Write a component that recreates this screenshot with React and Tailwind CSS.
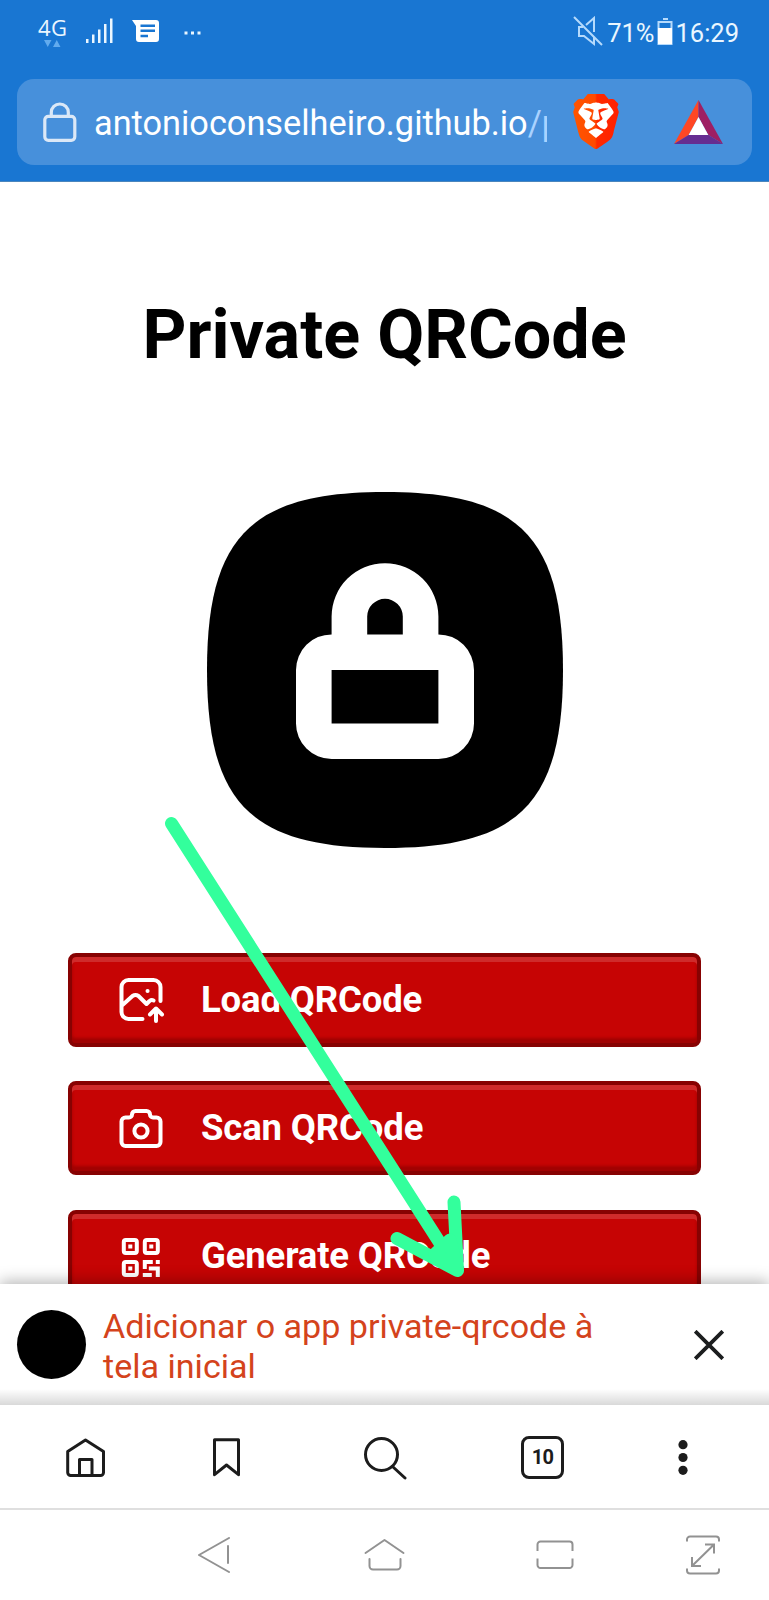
const ROBOTO = "font-['Roboto',sans-serif]";

function StatusBar() {
  return (
    <div className="flex h-[64px] shrink-0 items-start justify-between pl-[38px] pr-[30px] text-[#eaf6ff]">
      <div className="flex items-start pt-[17px]">
        <div className="-mt-[2px] flex w-[30px] flex-col">
          <span className="font-['Open_Sans',sans-serif] text-[22px] leading-[24px] tracking-[0.5px]">4G</span>
          <svg className="ml-[6px] mt-px" width="18" height="7" viewBox="0 0 18 7" fill="#62abee">
            <path d="M0 0h7.500L3.750 7zM9 7h7.500L12.750 0z" />
          </svg>
        </div>
        <svg className="ml-[17px] mt-px" width="29" height="26" viewBox="0 0 29 26" fill="currentColor">
          <path d="M1 21h2.500v4H1zM7 16.500h2.500V25H7zM13 11.500h2.500V25H13zM19 6h2.500v19H19zM25 .500h2.500V25H25z" />
        </svg>
        <svg className="ml-[18px] mt-[3px]" width="28" height="23" viewBox="0 0 28 23">
          <path d="M0 0h24a3 3 0 0 1 3 3v16a3 3 0 0 1-3 3H7a3 3 0 0 1-3-3V6z" fill="#fff" />
          <path d="M8.500 5.800H23M8.500 10.800H23M8.500 16H16" stroke="#1976d2" strokeWidth="2.500" />
        </svg>
        <svg className="ml-[24px] mt-[14px]" width="18" height="4" viewBox="0 0 18 4" fill="currentColor">
          <path d="M.500.500h3v3h-3zM7 .500h3v3H7zM13.500.500h3v3h-3z" />
        </svg>
      </div>
      <div className={`flex items-start pt-[16px] ${ROBOTO}`}>
        <svg width="31" height="31" viewBox="0 0 31 31" fill="none" stroke="#b5dafc" strokeWidth="2">
          <path d="M1 1l28 28M13 9l8-7v14M21 21v7L11 20H6V11h4" />
        </svg>
        <span className="ml-[3px] text-[25.500px] leading-[34px]">71%</span>
        <svg className="ml-[3px] mt-[1.500px]" width="17" height="28" viewBox="0 0 17 28">
          <path d="M6 1h5" stroke="#b5dafc" strokeWidth="2" />
          <rect x="1.500" y="4" width="13" height="22" fill="none" stroke="#b5dafc" strokeWidth="2" />
          <path d="M1 10h14v16H1z" fill="#fff" />
        </svg>
        <span className="ml-px text-[25.500px] leading-[34px]">16:29</span>
      </div>
    </div>
  );
}

function BraveIcon() {
  return (
    <svg width="46" height="55" viewBox="1.700 0 20.600 24" preserveAspectRatio="none">
      <defs>
        <linearGradient id="brave" x1="0" x2="1">
          <stop offset="0" stopColor="#ff5500" />
          <stop offset=".48" stopColor="#ff4a00" />
          <stop offset=".52" stopColor="#ff2a00" />
          <stop offset="1" stopColor="#ff2000" />
        </linearGradient>
      </defs>
      <path d="M7 3.200h10l3.500 4.500-3.500 8-5 4-5-4-3.500-8z" fill="#fff" />
      <path
        fill="url(#brave)"
        d="M15.680 0l2.096 2.380s1.840-.512 2.709.358c.868.870 1.584 1.638 1.584 1.638l-.562 1.381.715 2.047s-2.104 7.980-2.350 8.955c-.486 1.919-.818 2.660-2.198 3.633-1.380.972-3.884 2.660-4.293 2.916-.409.256-.920.692-1.380.692-.460 0-.970-.436-1.380-.692a185.796 185.796 0 01-4.293-2.916c-1.380-.973-1.712-1.714-2.197-3.633-.247-.975-2.351-8.955-2.351-8.955l.715-2.047-.562-1.381s.716-.768 1.585-1.638c.868-.870 2.708-.358 2.708-.358L8.321 0h7.360zm-3.679 14.936c-.140 0-1.038.317-1.758.690-.720.373-1.242.637-1.409.742-.167.104-.065.301.087.409.152.107 2.194 1.690 2.393 1.866.198.175.489.464.687.464.198 0 .490-.290.688-.464.198-.175 2.240-1.759 2.392-1.866.152-.108.254-.305.087-.410-.167-.104-.689-.368-1.410-.741-.720-.373-1.617-.690-1.757-.690zm0-11.278s-.409.001-1.022.206-1.278.460-1.584.460c-.307 0-2.581-.434-2.581-.434S4.119 7.152 4.119 7.849c0 .697.339.881.680 1.243l2.020 2.149c.192.203.590.511.356 1.066-.235.555-.580 1.260-.196 1.977.384.716 1.042 1.194 1.464 1.115.421-.080 1.412-.598 1.776-.834.364-.237 1.518-1.190 1.518-1.554 0-.365-1.193-1.020-1.413-1.168-.220-.150-1.226-.725-1.247-.950-.020-.227-.012-.293.284-.851.297-.559.831-1.304.742-1.800-.089-.495-.950-.753-1.565-.986-.615-.232-1.799-.671-1.947-.740-.148-.068-.110-.133.339-.175.448-.043 1.719-.212 2.292-.052.573.160 1.552.403 1.632.532.079.130.149.134.067.579-.081.445-.500 2.581-.541 2.960-.040.380-.120.630.288.724.409.094 1.097.256 1.333.256s.924-.162 1.333-.256c.408-.093.329-.344.288-.723-.040-.380-.460-2.516-.541-2.961-.082-.445-.012-.450.067-.579.080-.129 1.059-.372 1.632-.532.573-.160 1.845.009 2.292.052.449.042.487.107.339.175-.148.069-1.332.508-1.947.740-.615.233-1.476.490-1.565.986-.090.496.445 1.241.742 1.800.297.558.304.624.284.850-.020.226-1.026.802-1.247.950-.220.150-1.413.804-1.413 1.169 0 .364 1.154 1.317 1.518 1.554.364.236 1.355.755 1.776.834.422.079 1.080-.400 1.464-1.115.384-.716.039-1.422-.195-1.977-.235-.555.163-.863.355-1.066l2.020-2.149c.341-.362.680-.546.680-1.243 0-.697-2.695-3.960-2.695-3.960s-2.274.436-2.580.436c-.307 0-.972-.256-1.585-.461-.613-.205-1.022-.206-1.022-.206z"
      />
    </svg>
  );
}

function AddressBar() {
  return (
    <div className="mx-[17px] mt-[15px] flex h-[86px] items-center rounded-[17px] bg-[#4790db]">
      <svg className="ml-[26px]" width="34" height="40" viewBox="0 0 34 40" fill="none" stroke="#dbe8f7" strokeWidth="3.200">
        <rect x="1.800" y="14.300" width="30" height="24" rx="3.500" />
        <path d="M8.300 14V10.500a8.500 8.500 0 0 1 17 0V14" />
      </svg>
      <div className={`ml-[17px] w-[453px] overflow-hidden whitespace-nowrap pt-px text-[34.300px] leading-[44px] text-white ${ROBOTO}`}>
        antonioconselheiro.github.io<span className="text-[#a9d2ff]">/p</span>
      </div>
      <div className="mb-[2px] ml-[26px] flex">
        <BraveIcon />
      </div>
      <svg className="mb-px ml-[55px]" width="49" height="44" viewBox="0 0 50 44" preserveAspectRatio="none">
        <path d="M25 0v17L15 35 0 44z" fill="#ff4724" />
        <path d="M25 0l25 44-15-9-10-18z" fill="#9e1f63" />
        <path d="M0 44l15-9h20l15 9z" fill="#662d91" />
        <path d="M25 17l10 18H15z" fill="#fff" />
      </svg>
    </div>
  );
}

function AppLogo() {
  return (
    <svg className="mt-[114px] shrink-0 self-center" width="356" height="356" viewBox="0 0 20 20">
      <path d="M0 10C0 2.500 2.500 0 10 0s10 2.500 10 10-2.500 10-10 10S0 17.500 0 10z" />
      <path
        fill="#fff"
        fillRule="evenodd"
        d="M7 8V7a3 3 0 0 1 6 0v1a2 2 0 0 1 2 2v3a2 2 0 0 1-2 2H7a2 2 0 0 1-2-2v-3a2 2 0 0 1 2-2zM9 8h2V7a1 1 0 0 0-2 0zM7 10v3h6v-3z"
      />
    </svg>
  );
}

function LoadIcon() {
  return (
    <svg className="mt-[2px]" width="47" height="46" viewBox="-0.500 0 47 46" fill="none" stroke="#fff" strokeWidth="4" strokeLinecap="round" strokeLinejoin="round">
      <path d="M23 41H9a7 7 0 0 1-7-7V9a7 7 0 0 1 7-7h25a7 7 0 0 1 7 7v14M3 27l10-9q3-2 6 0l8 8 3-3q2-1.500 4-.500M28 13h.1M36.500 43V30.500M30.500 36.500l6-6 6 6" />
    </svg>
  );
}

function ScanIcon() {
  return (
    <svg className="mt-[4px]" width="47" height="42" viewBox="-0.500 0 47 42" fill="none" stroke="#fff" strokeWidth="4" strokeLinejoin="round">
      <path d="M2 12.500a4 4 0 0 1 4-4h3.500a3 3 0 0 0 3-3A3.500 3.500 0 0 1 16 2h11a3.500 3.500 0 0 1 3.500 3.500 3 3 0 0 0 3 3H37a4 4 0 0 1 4 4V33a4 4 0 0 1-4 4H6a4 4 0 0 1-4-4z" />
      <circle cx="21.500" cy="22" r="6.600" />
    </svg>
  );
}

function QrIcon() {
  return (
    <svg className="mt-[3px]" width="47" height="40" viewBox="-0.800 0 47 40" fill="none" stroke="#fff" strokeWidth="4" strokeLinejoin="round">
      <rect x="4" y="2" width="13" height="13" rx="2" />
      <rect x="25" y="2" width="13" height="13" rx="2" />
      <rect x="4" y="24" width="13" height="13" rx="2" />
      <path d="M8.500 6.500h4v4h-4zM29.500 6.500h4v4h-4zM8.500 28.500h4v4h-4zM36 22h4v4h-4z" fill="#fff" stroke="none" />
      <path d="M25 31v-7h8M23 37h9M29 30.500h9V39" strokeLinejoin="miter" />
    </svg>
  );
}

function MenuButton({ icon, label }) {
  return (
    <button className="flex h-[94px] w-full shrink-0 items-center rounded-[8px] border-4 border-[#870202] bg-[#c60404] pl-[47px] text-left shadow-[inset_0_5px_0_#cf2b2b,inset_0_-5px_3px_#a10202]">
      {icon}
      <span className="ml-[35px] text-[36.500px] font-bold leading-none tracking-[-0.150px] text-white">{label}</span>
    </button>
  );
}

function Arrow() {
  return (
    <svg className="pointer-events-none absolute left-[160px] top-[810px]" width="320" height="475" viewBox="160 810 320 475" fill="none" stroke="#33ff9c" strokeWidth="13" strokeLinecap="round" strokeLinejoin="round">
      <path d="M171.500 823.500L457.500 1270.500L454 1202M457.500 1270.500L397 1238.500" />
      <path d="M450 1240l7 28-22-14z" fill="#33ff9c" />
    </svg>
  );
}

function InstallBanner() {
  return (
    <div className="relative flex h-[121px] shrink-0 items-center bg-white pl-[17px] shadow-[0_-3px_14px_rgba(0,0,0,0.280)]">
      <div className="h-[69px] w-[69px] rounded-full bg-black" />
      <p className="ml-[17px] mt-[3px] w-[520px] text-[34.100px] leading-[40px] text-[#d4431c]">
        Adicionar o app private-qrcode à<br />tela inicial
      </p>
      <svg className="ml-[71px]" width="30" height="30" viewBox="0 0 30 30" stroke="#1c1e1f" strokeWidth="3.800">
        <path d="M1.200 1.200l27.600 27.600M28.800 1.200L1.200 28.800" />
      </svg>
      <div className="absolute inset-x-0 bottom-0 h-[16px] bg-linear-to-b from-transparent to-black/15" />
    </div>
  );
}

function BrowserNav() {
  return (
    <nav className="relative flex h-[105px] shrink-0 items-center border-b-2 border-[#dfdfdf] bg-white pl-[66px] pt-px text-[#1c1c1c]">
      <svg width="39" height="39" viewBox="0 0 39 39" fill="none" stroke="currentColor" strokeWidth="3" strokeLinejoin="round">
        <path d="M1.700 13.500L19.500 2l18 11.500v21a3 3 0 0 1-3 3H4.700a3 3 0 0 1-3-3zM13.500 37V21.500H26V37" />
      </svg>
      <svg className="ml-[108px]" width="27" height="39" viewBox="0 0 27 39" fill="none" stroke="currentColor" strokeWidth="3" strokeLinejoin="round">
        <path d="M1.500 1.700h24v35L13.500 27l-12 9.700z" />
      </svg>
      <svg className="ml-[124px] mt-[2px]" width="43" height="43" viewBox="0 0 43 43" fill="none" stroke="currentColor" strokeWidth="3" strokeLinecap="round">
        <circle cx="17.500" cy="17.500" r="16" />
        <path d="M28.500 29.500L41 41" />
      </svg>
      <div className="ml-[114px] flex h-[43px] w-[43px] items-center justify-center rounded-[8px] border-3 border-current">
        <span className="font-['Roboto',sans-serif] text-[20px] font-bold leading-none tracking-[-0.800px]">10</span>
      </div>
      <svg className="ml-[114px]" width="10" height="35" viewBox="0 0 10 35" fill="currentColor">
        <circle cx="5" cy="4.700" r="4.600" />
        <circle cx="5" cy="17.500" r="4.600" />
        <circle cx="5" cy="30.300" r="4.600" />
      </svg>
    </nav>
  );
}

function SystemNav() {
  return (
    <nav className="flex h-[89px] shrink-0 items-center pl-[197px] text-[#929292]">
      <svg width="34" height="36" viewBox="0 0 34 36" fill="none" stroke="currentColor" strokeWidth="2" strokeLinejoin="round" strokeLinecap="round">
        <path d="M32 1L2 18l30 17M31 9v17" />
      </svg>
      <svg className="ml-[133px]" width="42" height="33" viewBox="0 0 42 33" fill="none" stroke="currentColor" strokeWidth="2" strokeLinejoin="round" strokeLinecap="round">
        <path d="M1.500 15L20.500 2l19 13M5.500 21v7a3.500 3.500 0 0 0 3.500 3.500h24a3.500 3.500 0 0 0 3.500-3.500v-7" />
      </svg>
      <svg className="ml-[130px]" width="38" height="30" viewBox="0 0 38 30" fill="none" stroke="currentColor" strokeWidth="2">
        <path d="M1.500 11V4.500a3 3 0 0 1 3-3h29a3 3 0 0 1 3 3V11M1.500 18.500V25a3 3 0 0 0 3 3h29a3 3 0 0 0 3-3v-6.500" />
      </svg>
      <svg className="ml-[112px]" width="34" height="40" viewBox="0 0 34 40" fill="none" stroke="currentColor" strokeWidth="2">
        <path d="M1 6.500V4.500a3 3 0 0 1 3-3h26a3 3 0 0 1 3 3v2M1 33.500v2a3 3 0 0 0 3 3h26a3 3 0 0 0 3-3v-2M6.500 30.500L27.500 10M19 9.500h9v9M6 22v9h9" />
      </svg>
    </nav>
  );
}

export default function App() {
  return (
    <div className={`relative flex h-[1600px] w-[769px] flex-col overflow-hidden bg-white ${ROBOTO}`}>
      <header className="h-[182px] shrink-0 border-b border-[#4a86bd] bg-[#1976d2]">
        <StatusBar />
        <AddressBar />
      </header>
      <main className="relative flex h-[1102px] shrink-0 flex-col overflow-hidden">
        <h1 className="mt-[110px] text-center text-[68.300px] font-bold leading-[86px] text-black">Private QRCode</h1>
        <AppLogo />
        <div className="mx-[68px] mt-[105px] flex flex-col gap-[34.300px]">
          <MenuButton icon={<LoadIcon />} label="Load QRCode" />
          <MenuButton icon={<ScanIcon />} label="Scan QRCode" />
          <MenuButton icon={<QrIcon />} label="Generate QRCode" />
        </div>
      </main>
      <InstallBanner />
      <BrowserNav />
      <SystemNav />
      <Arrow />
    </div>
  );
}
